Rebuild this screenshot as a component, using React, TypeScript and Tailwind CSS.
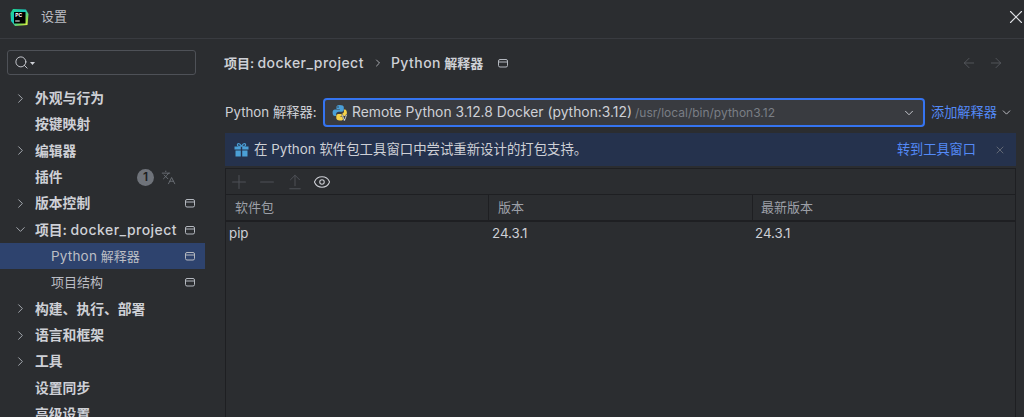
import { ArrowLeft, ArrowRight, ArrowUpFromLine, ChevronDown, ChevronRight, Eye, Languages, Minus, Plus, Search, X } from 'lucide-react';

const fontStack = "font-['Inter','Noto_Sans_CJK_SC',sans-serif]";

type NavItem = { label: string; arrow?: 'right' | 'down'; child?: boolean; selected?: boolean; project?: boolean; badge?: boolean };

const navItems: NavItem[] = [
  { label: '外观与行为', arrow: 'right' },
  { label: '按键映射' },
  { label: '编辑器', arrow: 'right' },
  { label: '插件', badge: true },
  { label: '版本控制', arrow: 'right', project: true },
  { label: '项目: docker_project', arrow: 'down', project: true },
  { label: 'Python 解释器', child: true, selected: true, project: true },
  { label: '项目结构', child: true, project: true },
  { label: '构建、执行、部署', arrow: 'right' },
  { label: '语言和框架', arrow: 'right' },
  { label: '工具', arrow: 'right' },
  { label: '设置同步' },
  { label: '高级设置' },
];

// latin words sit a bit wider than the cjk around them
function Mixed({ text, latinClass = 'text-[14px] font-medium tracking-[0.45px]' }: { text: string; latinClass?: string }) {
  return (
    <>
      {text.split(/([A-Za-z_]+)/).map((part, index) =>
        /^[A-Za-z_]+$/.test(part) ? (
          <span key={index} className={latinClass}>
            {part}
          </span>
        ) : (
          part
        ),
      )}
    </>
  );
}

function ProjectIcon({ className = '' }: { className?: string }) {
  return (
    <svg width="10" height="10" viewBox="0 0 10 10" fill="none" stroke="#b4b8bf" strokeWidth="1" className={className}>
      <rect x="0.5" y="1.5" width="9" height="7.5" rx="1.500" />
      <path d="M0.500 4h9" />
    </svg>
  );
}

function PyCharmLogo() {
  return (
    <svg width="19" height="19" viewBox="0 0 19 19">
      <defs>
        <linearGradient id="pc" x1="0" y1="0" x2="1" y2="1">
          <stop offset="0" stopColor="#21d789" />
          <stop offset="0.45" stopColor="#19c8c0" />
          <stop offset="0.75" stopColor="#8fdc4a" />
          <stop offset="1" stopColor="#fcf84a" />
        </linearGradient>
      </defs>
      <path d="M3 1 L16 1.500 L18.500 6 L17.500 17 L5 18 L1 13 L0.500 5 Z" fill="url(#pc)" />
      <rect x="4" y="4" width="11.500" height="11.500" fill="#000" />
      <text x="5.200" y="9.300" fontSize="5" fontWeight="700" fill="#fff" fontFamily="Inter">PC</text>
      <rect x="5.200" y="12.500" width="4.500" height="1" fill="#fff" />
    </svg>
  );
}

function PythonLogo() {
  return (
    <svg width="17" height="18" viewBox="0 0 17 18">
      <path d="M7.500 1C4.800 1 4.500 2 4.500 3.200V5h3.400v.6H3C1.500 5.600.6 6.800.6 8.800s.9 3.300 2.200 3.300h1.300v-1.800c0-1.400 1.200-2.600 2.700-2.600h3c1.200 0 2-.9 2-2V3.200C11.800 1.800 10.300 1 7.500 1Z" fill="#4a9fd8" />
      <circle cx="6" cy="3" r=".7" fill="#2b2d30" />
      <path d="M12 5.500v1.800c0 1.400-1.200 2.600-2.700 2.600h-3c-1.200 0-2 .9-2 2v2.300c0 1.300 1.200 2 3.200 2.300 2.300.3 4-.5 4-2.300v-1.700H8.300V12h4.700c1.300 0 1.900-1.200 1.900-3.200s-.8-3.300-1.900-3.300Z" fill="#f6d24a" />
      <path d="M9.500 10.500l2.400 6.500h1l2.400-6.500h-1.300l-1.600 4.600-1.600-4.600Z" fill="#e8e8e8" stroke="#2b2d30" strokeWidth=".4" />
    </svg>
  );
}

function GiftIcon() {
  return (
    <svg width="15" height="14" viewBox="0 0 15 14" fill="#4b9fd6">
      <rect x="0.500" y="3.500" width="6.300" height="3" />
      <rect x="8.200" y="3.500" width="6.300" height="3" />
      <rect x="1.500" y="7.500" width="5.300" height="6" />
      <rect x="8.200" y="7.500" width="5.300" height="6" />
      <path d="M7.500 3.200C6.400 1.200 5 .4 4 .8c-1 .5-.7 2 .5 2.400ZM7.500 3.200C8.600 1.200 10 .4 11 .8c1 .5.7 2-.5 2.400Z" fill="none" stroke="#4b9fd6" strokeWidth="1.100" />
    </svg>
  );
}

function NavRow({ item }: { item: NavItem }) {
  return (
    <div className={`relative flex h-[26.35px] shrink-0 items-center ${item.selected ? 'bg-[#2e436e]' : ''}`}>
      <span className="flex w-[35px] shrink-0 justify-center pl-[5px]">
        {item.arrow === 'right' ? <ChevronRight size={15} strokeWidth={1.4} className="text-[#b4b8bf]" /> : null}
        {item.arrow === 'down' ? <ChevronDown size={15} strokeWidth={1.4} className="text-[#b4b8bf]" /> : null}
      </span>
      <span className={`whitespace-nowrap ${item.child ? 'ml-4 text-[13px] text-[#bcbec4]' : 'text-[13.8px] font-semibold text-[#ced0d6]'}`}>
        <Mixed text={item.label} latinClass={item.child ? 'text-[13.5px] tracking-[0.2px]' : undefined} />
      </span>
      {item.badge ? (
        <span className="ml-auto mr-[29px] flex items-center gap-[7px]">
          <span className="flex h-[17px] w-[17px] items-center justify-center rounded-full bg-[#6f737a] text-[12px] font-semibold text-[#1e1f22]">1</span>
          <Languages size={15} strokeWidth={1.4} className="text-[#6f737a]" />
        </span>
      ) : null}
      {item.project ? <ProjectIcon className="absolute right-[10px] top-[8px]" /> : null}
    </div>
  );
}

export default function App() {
  return (
    <div className={`flex h-[417px] w-[1024px] flex-col overflow-hidden bg-[#2b2d30] text-[#ced0d6] ${fontStack}`}>
      <header className="flex h-[39px] shrink-0 items-center border-b border-[#393b40] pb-[4px] pl-[10px]">
        <PyCharmLogo />
        <span className="ml-[12px] text-[13px] text-[#bcbec4]">设置</span>
        <X size={22} strokeWidth={1.2} className="-mr-[3px] ml-auto text-[#dfe1e5]" />
      </header>

      <div className="flex min-h-0 flex-1">
        <aside className="flex w-[205px] shrink-0 flex-col overflow-hidden">
          <div className="ml-[7px] mt-[11px] flex h-[25px] w-[189px] shrink-0 items-center rounded-[3px] border border-[#4e5157] pl-[6px]">
            <Search size={15} strokeWidth={1.5} className="text-[#ced0d6]" />
            <svg width="5" height="3" viewBox="0 0 5 3" className="ml-[1px] mt-[2px]">
              <path d="M0 0h5L2.500 3Z" fill="#ced0d6" />
            </svg>
          </div>
          <nav className="mt-[10px] flex flex-col">
            {navItems.map((item) => (
              <NavRow key={item.label} item={item} />
            ))}
          </nav>
        </aside>

        <main className="flex min-w-0 flex-1 flex-col pl-[19px] pr-2">
          <div className="mt-[14px] flex h-5 shrink-0 items-center">
            <span className="whitespace-nowrap text-[13px] font-semibold">
              <Mixed text="项目: docker_project" />
            </span>
            <ChevronRight size={12} strokeWidth={1.5} className="ml-2 text-[#ced0d6]" />
            <span className="ml-[7px] whitespace-nowrap text-[13px] font-semibold">
              <Mixed text="Python 解释器" />
            </span>
            <ProjectIcon className="ml-[15px]" />
            <span className="ml-auto mr-[12px] flex items-center gap-[11px] text-[#5a5d63]">
              <ArrowLeft size={16} strokeWidth={1.2} />
              <ArrowRight size={16} strokeWidth={1.2} />
            </span>
          </div>

          <div className="mt-[25px] flex h-[29px] shrink-0 items-center">
            <span className="w-[99px] shrink-0 whitespace-nowrap pl-[1px] text-[13.3px] text-[#ced0d6]">Python 解释器:</span>
            <div className="flex h-[29px] w-[602px] shrink-0 items-center rounded-[4px] border-2 border-[#3574f0] bg-[#393b40] pl-[7px] pr-[5px]">
              <PythonLogo />
              <span className="ml-[3px] whitespace-nowrap text-[13.85px] text-[#ced0d6]">Remote Python 3.12.8 Docker (python:3.12)</span>
              <span className="ml-[3px] whitespace-nowrap text-[12px] text-[#7a7e85]">/usr/local/bin/python3.12</span>
              <ChevronDown size={14} strokeWidth={1.6} className="ml-auto mr-[2px] text-[#ced0d6]" />
            </div>
            <span className="ml-[6px] whitespace-nowrap text-[13.2px] text-[#548af7]">添加解释器</span>
            <ChevronDown size={13} strokeWidth={1.6} className="ml-[3px] text-[#ced0d6]" />
          </div>

          <div className="ml-[1px] mt-[6px] flex h-[33px] w-[791px] shrink-0 items-center bg-[#25324d] pl-[9px] pr-[10px]">
            <GiftIcon />
            <span className="ml-[5px] whitespace-nowrap text-[13.4px] text-[#ced0d6]">在 Python 软件包工具窗口中尝试重新设计的打包支持。</span>
            <span className="ml-auto whitespace-nowrap text-[13.2px] text-[#548af7]">转到工具窗口</span>
            <X size={12} strokeWidth={1.4} className="ml-[18px] text-[#7a7e85]" />
          </div>

          <section className="ml-[1px] mt-[2px] flex min-h-0 w-[791px] flex-1 flex-col border-x border-t border-[#1e1f22]">
            <div className="flex h-[26px] shrink-0 items-center gap-[6px] border-b border-[#1e1f22] pl-[2px]">
              <Plus size={22} strokeWidth={1.1} className="text-[#4e5157]" />
              <Minus size={22} strokeWidth={1.1} className="text-[#4e5157]" />
              <ArrowUpFromLine size={18} strokeWidth={1.3} className="mx-[2px] text-[#4e5157]" />
              <Eye size={18} strokeWidth={1.4} className="ml-[1px] text-[#ced0d6]" />
            </div>
            <div className="grid h-[27px] shrink-0 grid-cols-[263px_264px_1fr] border-b-2 border-[#1e1f22] text-[13px] text-[#9da0a8]">
              <div className="flex items-center border-r border-[#1e1f22] pl-[9px]">软件包</div>
              <div className="flex items-center border-r border-[#1e1f22] pl-[9px]">版本</div>
              <div className="flex items-center pl-[8px]">最新版本</div>
            </div>
            <div className="grid h-[24px] shrink-0 grid-cols-[263px_264px_1fr] text-[13.3px] text-[#ced0d6]">
              <div className="flex items-center pl-[3px]">pip</div>
              <div className="flex items-center pl-[3px]">24.3.1</div>
              <div className="flex items-center pl-[2px]">24.3.1</div>
            </div>
          </section>
        </main>
      </div>
    </div>
  );
}
